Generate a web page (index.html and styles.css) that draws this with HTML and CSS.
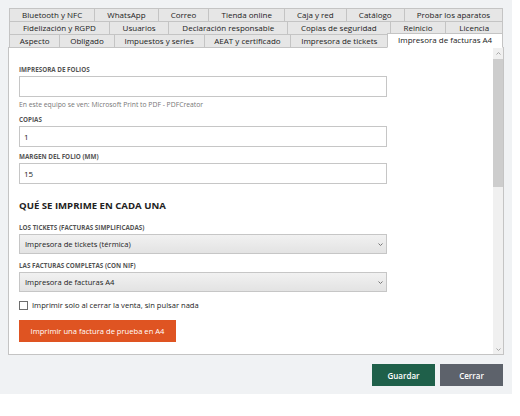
FILE: index.html
```html
<!DOCTYPE html>
<html lang="es">

<head>
    <meta charset="UTF-8">
    <meta name="viewport" content="width=device-width, initial-scale=1.0">
    <title>Configuración - Impresora de facturas A4</title>
    <link rel="stylesheet" href="styles.css">
</head>

<body>
    <div class="window">
        <div class="tabs">
            <div class="tab-row">
                <span class="tab">Bluetooth y NFC</span>
                <span class="tab">WhatsApp</span>
                <span class="tab">Correo</span>
                <span class="tab">Tienda online</span>
                <span class="tab">Caja y red</span>
                <span class="tab">Catálogo</span>
                <span class="tab">Probar los aparatos</span>
            </div>
            <div class="tab-row">
                <span class="tab">Fidelización y RGPD</span>
                <span class="tab">Usuarios</span>
                <span class="tab">Declaración responsable</span>
                <span class="tab">Copias de seguridad</span>
                <span class="tab">Reinicio</span>
                <span class="tab">Licencia</span>
            </div>
            <div class="tab-row">
                <span class="tab">Aspecto</span>
                <span class="tab">Obligado</span>
                <span class="tab">Impuestos y series</span>
                <span class="tab">AEAT y certificado</span>
                <span class="tab">Impresora de tickets</span>
                <span class="tab active">Impresora de facturas A4</span>
            </div>
        </div>

        <div class="panel">
            <div class="panel-body">
                <label class="field-label" for="printer">Impresora de folios</label>
                <input class="field" type="text" id="printer" value="">
                <p class="hint">En este equipo se ven: Microsoft Print to PDF - PDFCreator</p>

                <label class="field-label spaced" for="copies">Copias</label>
                <input class="field" type="text" id="copies" value="1">

                <label class="field-label spaced" for="margin">Margen del folio (mm)</label>
                <input class="field" type="text" id="margin" value="15">

                <h3 class="section-title">Qué se imprime en cada una</h3>

                <span class="field-label">Los tickets (facturas simplificadas)</span>
                <div class="select">
                    <span>Impresora de tickets (térmica)</span>
                    <svg width="5" height="3" viewBox="0 0 5 3"><path d="M0.5 0.5 L2.5 2.5 L4.5 0.5" fill="none" stroke="#777" stroke-width="1"/></svg>
                </div>

                <span class="field-label spaced">Las facturas completas (con NIF)</span>
                <div class="select">
                    <span>Impresora de facturas A4</span>
                    <svg width="5" height="3" viewBox="0 0 5 3"><path d="M0.5 0.5 L2.5 2.5 L4.5 0.5" fill="none" stroke="#777" stroke-width="1"/></svg>
                </div>

                <label class="check-row">
                    <input type="checkbox" class="check">
                    <span>Imprimir solo al cerrar la venta, sin pulsar nada</span>
                </label>

                <button class="btn-test">Imprimir una factura de prueba en A4</button>
            </div>

            <div class="scrollbar">
                <div class="sb-arrow">
                    <svg width="5" height="3" viewBox="0 0 5 3"><path d="M0.5 2.5 L2.5 0.5 L4.5 2.5" fill="none" stroke="#a6a6a6" stroke-width="1"/></svg>
                </div>
                <div class="sb-thumb"></div>
                <div class="sb-track"></div>
                <div class="sb-arrow">
                    <svg width="5" height="3" viewBox="0 0 5 3"><path d="M0.5 0.5 L2.5 2.5 L4.5 0.5" fill="none" stroke="#a6a6a6" stroke-width="1"/></svg>
                </div>
            </div>
        </div>

        <div class="actions">
            <button class="btn btn-save">Guardar</button>
            <button class="btn btn-close">Cerrar</button>
        </div>
    </div>
</body>

</html>
```

FILE: styles.css
```css
* {
    box-sizing: border-box;
}

body {
    margin: 0;
    background-color: #ffffff;
    font-family: "Open Sans", "Noto Sans", sans-serif;
    color: #222;
}

.window {
    width: 512px;
    height: 394px;
    background-color: #f0f2f4;
    padding: 8px 8px 8px 8px;
    display: flex;
    flex-direction: column;
}

/* tabs */

.tabs {
    padding: 0 1px;
    position: relative;
    z-index: 1;
    margin-bottom: -1px;
}

.tab-row {
    display: flex;
    margin-bottom: -1px;
}

.tab-row:last-child {
    margin-bottom: 0;
}

.tab {
    flex: 1 1 auto;
    height: 14px;
    padding: 0 4px;
    margin-right: -1px;
    border: 1px solid #c4c4c4;
    background-color: #e6e6e6;
    font-size: 8px;
    line-height: 12px;
    text-align: center;
    white-space: nowrap;
}

.tab:last-child {
    margin-right: 0;
}

.tab.active {
    height: 15px;
    margin-top: -1px;
    background-color: #ffffff;
    border-bottom-color: #ffffff;
}

/* panel */

.panel {
    height: 308px;
    border: 1px solid #c4c4c4;
    background-color: #ffffff;
    display: flex;
}

.panel-body {
    flex: 1;
    overflow: hidden;
    padding: 17px 0 0 10px;
}

.field-label {
    display: block;
    font-size: 6.3px;
    font-weight: 700;
    line-height: 9px;
    text-transform: uppercase;
    color: #555;
    margin-bottom: 2px;
}

.field-label.spaced {
    margin-top: 5px;
}

.field {
    display: block;
    width: 368px;
    height: 21px;
    padding: 0 4px;
    border: 1px solid #c6c6c6;
    font-family: inherit;
    font-size: 8px;
    color: #222;
    background-color: #fff;
    outline: none;
}

.hint {
    margin: 3px 0 0;
    font-size: 6.8px;
    line-height: 10px;
    color: #777;
}

.section-title {
    margin: 15px 0 10px;
    font-size: 9.6px;
    line-height: 14px;
    font-weight: 700;
    text-transform: uppercase;
    color: #222;
}

.select {
    width: 368px;
    height: 20px;
    padding: 0 3px 0 5px;
    display: flex;
    align-items: center;
    justify-content: space-between;
    border: 1px solid #c6c6c6;
    background: linear-gradient(#f1f1f1, #e3e3e3);
    font-size: 7.6px;
    color: #222;
}

.select + .field-label.spaced {
    margin-top: 7px;
}

.check-row {
    display: flex;
    align-items: center;
    gap: 4px;
    margin-top: 8px;
    font-size: 7.6px;
    line-height: 10px;
    color: #222;
}

.check {
    appearance: none;
    margin: 0;
    width: 9px;
    height: 9px;
    border: 1px solid #6e6e6e;
    background-color: #fff;
}

.btn-test {
    display: block;
    margin-top: 10px;
    width: 157px;
    height: 22px;
    border: none;
    background-color: #df5422;
    color: #fff;
    font-family: inherit;
    font-size: 7.6px;
    padding: 0;
}

/* fake scrollbar */

.scrollbar {
    width: 10px;
    display: flex;
    flex-direction: column;
    background-color: #f0f0f0;
}

.sb-arrow {
    height: 10px;
    display: flex;
    align-items: center;
    justify-content: center;
}

.sb-thumb {
    height: 128px;
    margin-top: 1px;
    background-color: #cdcdcd;
}

.sb-track {
    flex: 1;
}

/* bottom buttons */

.actions {
    display: flex;
    justify-content: flex-end;
    gap: 5px;
    margin-top: 9px;
    padding-right: 1px;
}

.btn {
    width: 63px;
    height: 22px;
    border: none;
    color: #fff;
    font-family: inherit;
    font-size: 8px;
    font-weight: 600;
    padding: 0;
}

.btn-save {
    background-color: #1f604a;
}

.btn-close {
    background-color: #5d626b;
}
```
